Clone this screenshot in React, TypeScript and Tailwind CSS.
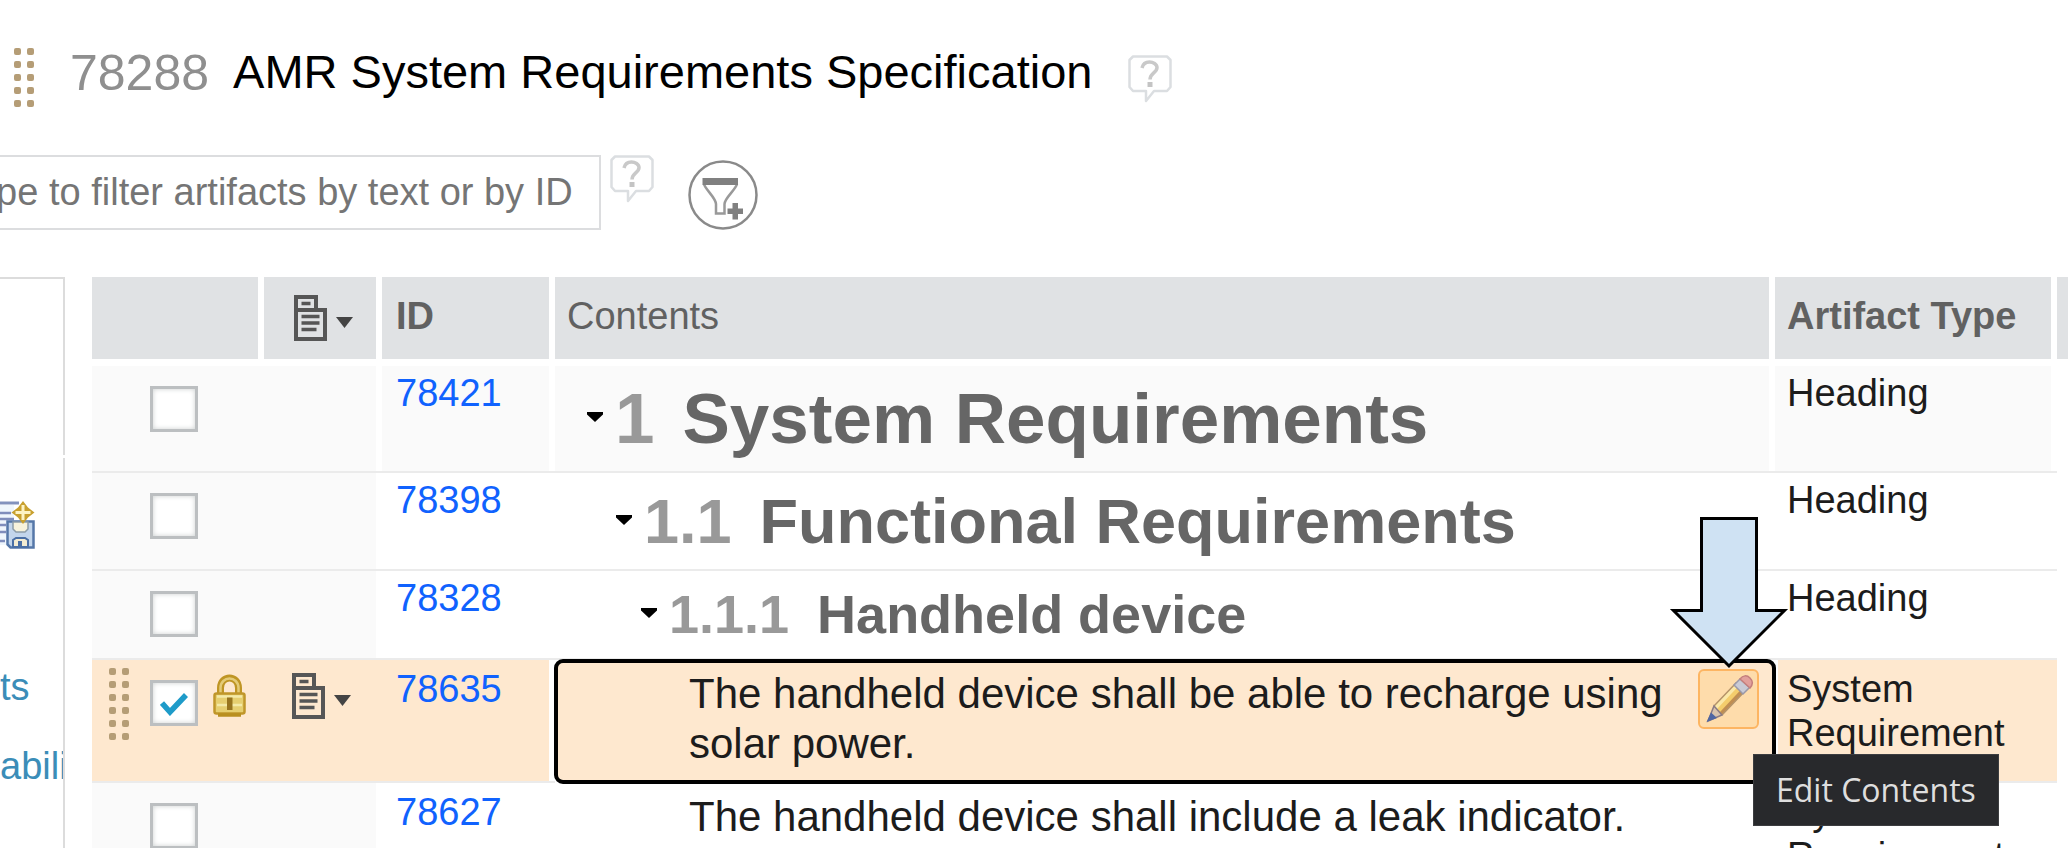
import React, { useState } from 'react';

type Row = {
  id: string;
  type: string;
  level?: 1 | 2 | 3;
  number?: string;
  text: string;
};

const rows: Row[] = [
  { id: '78421', type: 'Heading', level: 1, number: '1', text: 'System Requirements' },
  { id: '78398', type: 'Heading', level: 2, number: '1.1', text: 'Functional Requirements' },
  { id: '78328', type: 'Heading', level: 3, number: '1.1.1', text: 'Handheld device' },
  { id: '78635', type: 'System Requirement', text: 'The handheld device shall be able to recharge using solar power.' },
  { id: '78627', type: 'System Requirement', text: 'The handheld device shall include a leak indicator.' },
];

const headingStyles = {
  1: 'pl-8 text-[71px] leading-[105px]',
  2: 'pl-[61px] text-[63px] leading-[96px]',
  3: 'pl-[86px] text-[54px] leading-[87px]',
};

const Grip = ({ count }: { count: number }) => (
  <span className="grid w-5 shrink-0 grid-cols-2 gap-x-[6px] gap-y-[6px]">
    {Array.from({ length: count * 2 }, (_, i) => (
      <span key={i} className="h-[7px] w-[7px] rounded-[2px] bg-[#b59d76]" />
    ))}
  </span>
);

const HelpIcon = () => (
  <svg viewBox="0 0 44 48" className="h-12 w-11" fill="none">
    <path
      d="M5 1.500h34l3.500 3.500v27l-3.500 4H26l-8 10v-10H5l-3.500-4V5z"
      stroke="#dbdee1"
      strokeWidth="2.500"
      strokeLinejoin="round"
    />
    <path d="M14 13c1-4.500 4-6 7.500-6s7.500 2 7.500 5.500c0 5.500-7 5.500-7 12" stroke="#c9c9c9" strokeWidth="3.500" />
    <path d="M19.500 27h5v5h-5z" fill="#c4c4c4" />
  </svg>
);

const FilterIcon = () => (
  <svg viewBox="0 0 70 70" className="h-[70px] w-[70px]" fill="none">
    <circle cx="35" cy="35" r="33.500" stroke="#8a8a8a" strokeWidth="2.500" />
    <path d="M16 24c1 5 12 14 12 20v9.500h8.500V44c0-6 11-14 12.500-20" stroke="#999" strokeWidth="2.500" />
    <path d="M14.500 18h35.500v7H14.500z" fill="#808080" />
    <path d="M44.500 43h5.500v5.500h5v5.500h-5v5.500h-5.500V54H39.500v-5.500h5z" fill="#808080" />
  </svg>
);

const DocMenuIcon = () => (
  <svg viewBox="0 0 60 46" className="h-[46px] w-[60px]" fill="none">
    <path d="M2 15V2h20v13M2 15h29v29H2z" stroke="#565656" strokeWidth="4" />
    <path d="M7.500 8.500h9M7.500 21.500h18M7.500 28h18M7.500 34.500h15" stroke="#565656" strokeWidth="3.500" />
    <path d="M42 22h17L50.500 33z" fill="#444" />
  </svg>
);

const LockIcon = () => (
  <svg viewBox="0 0 33 44" className="h-11 w-[33px]" fill="none">
    <path d="M7.500 22V14C7.500 7.500 12 4 16.500 4s9 3.500 9 10v8" stroke="#bf9524" strokeWidth="7" />
    <path d="M7.500 22V14C7.500 8 12 4.500 16.500 4.500s9 3.500 9 9.500v8" stroke="#e4cb77" strokeWidth="2.500" />
    <rect x="1.500" y="19.500" width="30" height="20" rx="2" fill="#e6cf70" stroke="#c0962a" strokeWidth="2.500" />
    <path d="M4 22.500h25M4 31h25" stroke="#f4eaa8" strokeWidth="2.500" />
    <path d="M5 41h23" stroke="#b98f1f" strokeWidth="3.500" />
    <path d="M14 23.500h5.500V36H14z" fill="#97751e" />
  </svg>
);

const SaveViewIcon = () => (
  <svg viewBox="0 0 35 48" className="h-12 w-[35px]" fill="none">
    <path d="M0 2h19" stroke="#8292bd" strokeWidth="3" />
    <path d="M0 4h14v40H0z" fill="#eff6fc" />
    <path d="M0 12h11M0 18h14M0 24h6M0 31h6M0 40h5" stroke="#7f8dbb" strokeWidth="2.500" />
    <path d="M7.500 20.500h26v26h-23l-3-3z" fill="#c3d6ec" stroke="#5577a8" strokeWidth="2.500" />
    <path d="M13 21h15v7l-3 3h-9l-3-3z" fill="#f7f3dc" stroke="#8d9da8" strokeWidth="1.500" />
    <path d="M13 46V39l3-2h9l3 2v7z" fill="#f3ecd2" stroke="#4a6fa5" strokeWidth="2" />
    <path d="M18 40h4v6h-4z" fill="#4a6fa5" />
    <path d="M23 0 L28 6.500 34.500 11.500 28 16.500 23 23 18 16.500 11.500 11.500 18 6.500z" fill="#c8a02f" />
    <path d="M23 4v15M15.500 11.500h15" stroke="#fdf3c4" strokeWidth="3" />
  </svg>
);

const PencilIcon = () => (
  <svg viewBox="0 0 50 50" className="h-[50px] w-[50px]" fill="none">
    <path d="M10 32 32 9l9 8-23 24z" fill="#f4cd6c" />
    <path d="M10 32 32 9l3 2.500L13 35z" fill="#fbe8a8" />
    <path d="M15.500 38.500 38 14.500l3 2.500-23 24z" fill="#c08e52" />
    <path d="M10 32 32 9l9 8-23 24" stroke="#b5946a" strokeWidth="1.500" />
    <path d="M10 32l8 9-14 6z" fill="#d9c3ac" stroke="#8b7b83" strokeWidth="1.500" />
    <path d="M7 38.500l6 5.500L2.500 48z" fill="#4f66a3" />
    <path d="M30 11l6-6 9.500 8.500L39 20z" fill="#c9cbd6" stroke="#9a98a8" strokeWidth="1.500" />
    <path d="M36 5c3-4 7-4 10-1s3.500 6 0 10z" fill="#e2a09c" stroke="#c47f7d" strokeWidth="1.500" />
  </svg>
);

const Caret = () => (
  <svg viewBox="0 0 16 10" className="mb-[3px] h-[10px] w-4">
    <path d="M0 0h16v2.500L8 10 0 2.500z" fill="#000" />
  </svg>
);

const EditContents = () => (
  <div className="relative mr-4 shrink-0">
    <button
      type="button"
      aria-label="Edit Contents"
      className="flex h-[60px] w-[61px] items-center justify-center rounded-md border-2 border-[#fdb562] bg-[#fedcab]"
    >
      <PencilIcon />
    </button>
    <svg
      viewBox="0 0 119 152"
      className="absolute bottom-full left-1/2 z-10 h-[152px] w-[119px] -translate-x-1/2"
    >
      <path d="M32 1.500h55v92h28L59.500 149 4 93.500h28z" fill="#cfe2f3" stroke="#000" strokeWidth="3" />
    </svg>
    <div
      role="tooltip"
      className="absolute top-[85px] left-[55px] z-10 border border-[#3c3d40] bg-[#28292c] px-[22px] py-3 font-['Open_Sans',sans-serif] text-[32px] leading-[46px] whitespace-nowrap text-[#dedede]"
    >
      Edit Contents
    </div>
  </div>
);

const App: React.FC = () => {
  const [selected, setSelected] = useState<string[]>(['78635']);

  const toggle = (id: string) => {
    setSelected(selected.includes(id) ? selected.filter((s) => s !== id) : [...selected, id]);
  };

  return (
    <div className="flex h-screen flex-col overflow-hidden bg-white font-['Liberation_Sans',Arial,sans-serif] text-[38px] leading-[44px] text-[#1c1c1c]">
      <header className="flex h-[155px] shrink-0 items-start pt-12 pl-[14px]">
        <Grip count={5} />
        <span className="ml-9 text-[50px] leading-none text-[#8f8f8f]">78288</span>
        <h1 className="ml-6 text-[47px] leading-none whitespace-nowrap text-black">
          AMR System Requirements Specification
        </h1>
        <button type="button" aria-label="Help" className="mt-[7px] ml-9">
          <HelpIcon />
        </button>
      </header>

      <div className="flex shrink-0 items-start pb-[47px]">
        <input
          type="text"
          aria-label="Filter artifacts"
          placeholder="Type to filter artifacts by text or by ID"
          className="-ml-[60px] h-[75px] w-[661px] border-2 border-[#dcdddf] pl-[14px] placeholder:text-[#757575]"
        />
        <button type="button" aria-label="Filter help" className="ml-[9px]">
          <HelpIcon />
        </button>
        <button type="button" aria-label="Add filter" className="mt-[5px] ml-[34px]">
          <FilterIcon />
        </button>
      </div>

      <div className="flex min-h-0 flex-1">
        <aside className="mr-[27px] flex w-[65px] shrink-0 flex-col gap-[3px] overflow-hidden whitespace-nowrap text-[#3b8db8]">
          <div className="h-[178px] shrink-0 border-t-2 border-r-2 border-[#dcdcdc]" />
          <div className="flex flex-1 flex-col items-start overflow-hidden border-r-2 border-[#dcdcdc] pt-[43px]">
            <SaveViewIcon />
            <a href="#ts" className="mt-[116px]">ts</a>
            <a href="#abili" className="mt-[35px]">abili</a>
          </div>
        </aside>

        <div className="min-w-0 flex-1">
          <table className="w-full table-fixed border-separate border-spacing-0">
            <colgroup>
              <col className="w-[172px]" />
              <col className="w-[118px]" />
              <col className="w-[173px]" />
              <col />
              <col className="w-[282px]" />
              <col className="w-[11px]" />
            </colgroup>
            <thead>
              <tr className="h-[89px] text-left align-top text-[#616161] *:border-b-[7px] *:border-white *:bg-[#e0e2e4] *:p-0">
                <th className="shadow-[inset_-6px_0_0_#fff]" />
                <th className="shadow-[inset_-6px_0_0_#fff]">
                  <button type="button" aria-label="Artifact menu" className="mt-[18px] ml-[30px] block">
                    <DocMenuIcon />
                  </button>
                </th>
                <th className="shadow-[inset_-6px_0_0_#fff]">
                  <div className="pt-[17px] pl-[14px]">ID</div>
                </th>
                <th className="font-normal shadow-[inset_-6px_0_0_#fff]">
                  <div className="pt-[17px] pl-3">Contents</div>
                </th>
                <th className="shadow-[inset_-6px_0_0_#fff]">
                  <div className="pt-[17px] pl-3 whitespace-nowrap">Artifact Type</div>
                </th>
                <th />
              </tr>
            </thead>
            <tbody>
              {rows.map((row, index) => {
                const isSelected = selected.includes(row.id);
                const cell = `border-b-2 border-[#ebebeb] p-0 ${isSelected ? 'bg-[#fee8cf]' : ''}`;
                const side = isSelected ? '' : 'bg-[#fafafa]';
                const shade = !isSelected && index === 0 ? 'bg-[#fafafa]' : '';
                const textTop = row.level ? 'pt-[5px]' : 'pt-[7px]';
                return (
                  <tr key={row.id} className="align-top">
                    <td className={`${cell} ${side}`}>
                      <div className="flex items-start pt-2 pl-[17px]">
                        {isSelected ? <Grip count={6} /> : <span className="w-5" />}
                        <label className="relative mt-3 ml-[21px] block">
                          <input
                            type="checkbox"
                            aria-label={`Select ${row.id}`}
                            checked={isSelected}
                            onChange={() => toggle(row.id)}
                            className="block h-[46px] w-12 appearance-none border-[3px] border-[#bcbfc1] bg-white shadow-[inset_0_0_5px_#ccd0d0]"
                          />
                          {isSelected && (
                            <svg viewBox="0 0 28 24" className="absolute top-3 left-[10px] h-6 w-7" fill="none">
                              <path d="M2 11l8 9L26 3" stroke="#1e9bc9" strokeWidth="5.500" />
                            </svg>
                          )}
                        </label>
                        {isSelected && (
                          <span className="mt-[6px] ml-[15px]">
                            <LockIcon />
                          </span>
                        )}
                      </div>
                    </td>
                    <td className={`${cell} ${side} ${isSelected ? '' : 'shadow-[inset_-6px_0_0_#fff]'}`}>
                      {isSelected && (
                        <button type="button" aria-label="Row menu" className="mt-[13px] ml-7 block">
                          <DocMenuIcon />
                        </button>
                      )}
                    </td>
                    <td className={`${cell} ${shade} shadow-[inset_-6px_0_0_#fff]`}>
                      <div className={`${textTop} pl-[14px]`}>
                        <a href={`#${row.id}`} className="text-[#1062fe]">{row.id}</a>
                      </div>
                    </td>
                    <td
                      className={`${cell} ${shade} ${
                        isSelected ? 'rounded-lg outline-4 -outline-offset-3 outline-black' : 'shadow-[inset_-6px_0_0_#fff]'
                      }`}
                    >
                      {row.level ? (
                        <h2 className={`flex items-center font-bold whitespace-nowrap text-[#666] ${headingStyles[row.level]}`}>
                          <Caret />
                          <span className="ml-3 text-[#999]">{row.number}</span>
                          <span className="ml-7">{row.text}</span>
                        </h2>
                      ) : (
                        <div className="flex items-start pt-[9px] pb-3 pl-[134px] text-[42px] leading-[50px]">
                          <p className="flex-1">{row.text}</p>
                          {isSelected && <EditContents />}
                        </div>
                      )}
                    </td>
                    <td
                      className={`${cell} ${shade} ${
                        isSelected ? 'shadow-[inset_3px_0_0_#fff]' : 'shadow-[inset_-6px_0_0_#fff]'
                      }`}
                    >
                      <div className={`${textTop} pl-3`}>{row.type}</div>
                    </td>
                    <td />
                  </tr>
                );
              })}
            </tbody>
          </table>
        </div>
      </div>
    </div>
  );
};

export default App;
